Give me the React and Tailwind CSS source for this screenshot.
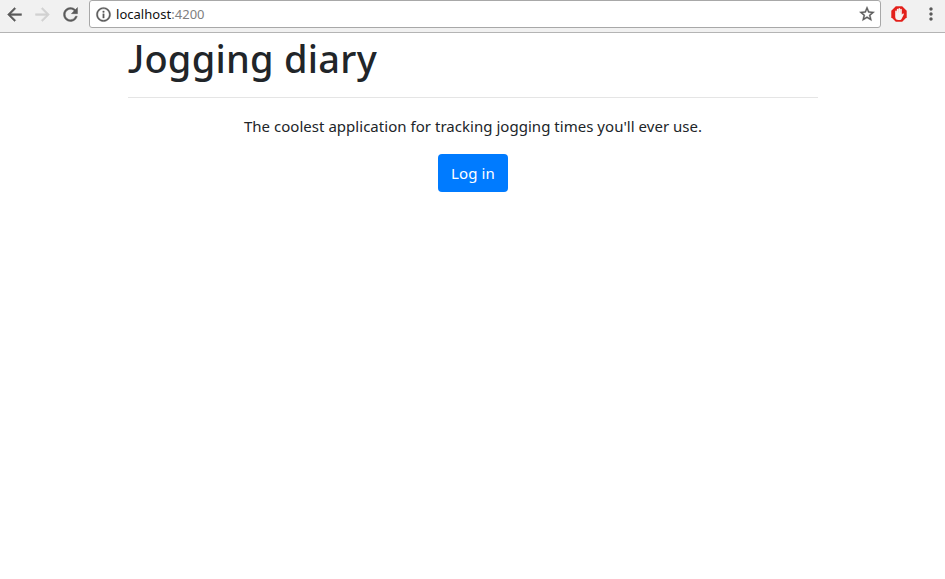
import { MdArrowBack, MdArrowForward, MdRefresh, MdInfoOutline, MdStarBorder, MdMoreVert } from "react-icons/md";

function BlockerIcon() {
  return (
    <svg width="16" height="16" viewBox="0 0 16 16" className="ml-[10px] shrink-0">
      <path d="M4.8 .3h6.4l4.5 4.5v6.4l-4.5 4.5H4.8L.3 11.2V4.8z" fill="#e3201b" />
      <path
        d="M4.2 5.2c0-.9 1.5-.9 1.5 0v1.600h.1V3.400c0-1 1.600-1 1.600 0v3h.1V2.800c0-1 1.600-1 1.600 0v3.600h.1V3.600c0-1 1.600-1 1.600 0v5.200l.8-1c.6-.7 1.500-.2 1.200.6l-2 4c-.5 1.100-1.200 1.600-2.300 1.600H7.400c-2 0-3.200-1.300-3.200-3.300z"
        fill="#f7f2f0"
      />
    </svg>
  );
}

function Toolbar() {
  return (
    <header className="flex h-[33px] items-start border-b border-[#b4b4b4] bg-[#f1f1f1] text-[#5a5a5a]">
      <div className="flex h-[28px] w-[89px] shrink-0 items-center gap-[7px] pl-[4px] [&_path:not([fill=none])]:stroke-current [&_path:not([fill=none])]:[stroke-width:0.5px]">
        <MdArrowBack size={21} />
        <MdArrowForward size={21} className="text-[#d2d2d2]" />
        <MdRefresh size={21} />
      </div>
      <div className="flex h-[28px] w-[792px] shrink-0 items-center rounded-[3px] border border-[#a8a8a8] bg-white pr-[4px] pl-[5px] [&_path:not([fill=none])]:stroke-current [&_path:not([fill=none])]:[stroke-width:0.5px]">
        <MdInfoOutline size={17} />
        <span className="ml-[4px] flex-1 text-[13px] leading-[18px] tracking-[0.03px] text-[#111]">
          localhost<span className="text-[#808080]">:4200</span>
        </span>
        <MdStarBorder size={18} />
      </div>
      <div className="flex h-[28px] flex-1 items-center">
        <BlockerIcon />
        <MdMoreVert size={20} className="ml-[14px] shrink-0" />
      </div>
    </header>
  );
}

export default function App() {
  return (
    <div className="h-[579px] overflow-hidden bg-white font-['Noto_Sans','Open_Sans',sans-serif] text-[#212529]">
      <Toolbar />
      <main className="ml-[128px] w-[690px] text-center">
        <h1 className="h-[50px] pt-[1px] text-left text-[38px] leading-[48px] font-medium tracking-[0.25px]">
          <span className="font-['Lato'] font-medium">J</span>ogging diary
        </h1>
        <hr className="mt-[14px] border-[#e5e5e5]" />
        <p className="mt-[16px] text-[15px] leading-[24px] tracking-[0.03px] whitespace-nowrap">
          The coolest application for tracking jogging times you'll ever use.
        </p>
        <button className="mt-[16px] h-[38px] w-[70px] rounded-[4px] bg-[#007bff] text-[15px] leading-[24px] tracking-[0.1px] text-white">
          Log in
        </button>
      </main>
    </div>
  );
}
